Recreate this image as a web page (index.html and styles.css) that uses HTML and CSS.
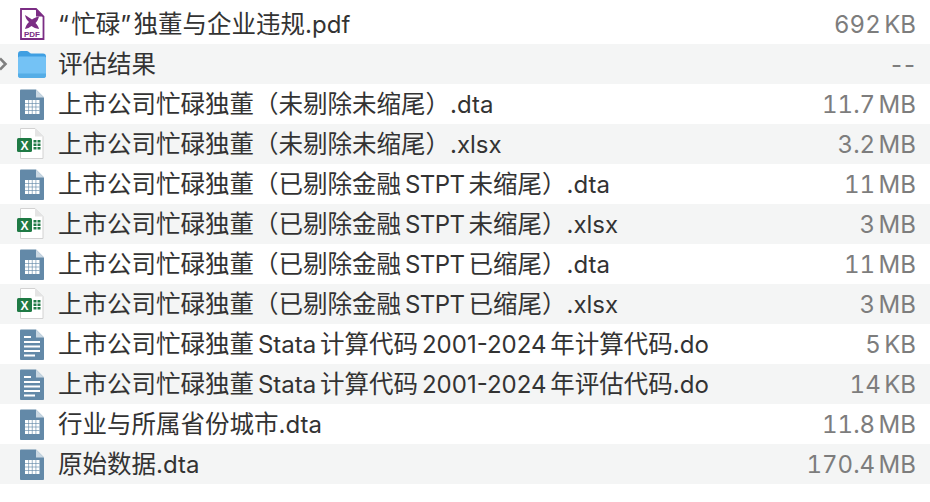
FILE: index.html
```html
<!DOCTYPE html>
<html lang="zh-CN">
<head>
  <meta charset="UTF-8" />
  <title>文件列表</title>
  <link rel="stylesheet" href="styles.css">
</head>
<body>

  <svg class="defs" width="0" height="0">
    <symbol id="i-folder" viewBox="0 0 30 32">
      <path d="M2 6C2 4 3 3 5 3H11C13 3 13.500 5.500 15 5.500H27C29 5.500 30 6.500 30 8.500V27C30 29 29 30 27 30H5C3 30 2 29 2 27Z" fill="#3f9fe2"/>
      <path d="M2 10C2 9 3 8.500 4 8.500H28C29 8.500 30 9 30 10V27C30 29 29 30 27 30H5C3 30 2 29 2 27Z" fill="#74c2f5"/>
      <path d="M2 25.500H30V27C30 29 29 30 27 30H5C3 30 2 29 2 27Z" fill="#55ade6"/>
    </symbol>
    <symbol id="i-dta" viewBox="0 0 30 32">
      <path d="M5 1.500H20L28 9.500V31C28 31.500 27.500 32 27 32H5C4.500 32 4 31.500 4 31V2.500C4 2 4.500 1.500 5 1.500Z" fill="#6389a8"/>
      <path d="M20 1.500L28 9.500H20Z" fill="#c9d7e2"/>
      <path d="M9 12H23.500V26H9Z" fill="#fff"/>
      <path d="M9 15.500H23.500M9 19H23.500M9 22.500H23.500M12.600 12V26M16.250 12V26M19.900 12V26" stroke="#6389a8" stroke-width="0.8" stroke-opacity="0.8"/>
    </symbol>
    <symbol id="i-do" viewBox="0 0 30 32">
      <path d="M5 1.500H20L28 9.500V31C28 31.500 27.500 32 27 32H5C4.500 32 4 31.500 4 31V2.500C4 2 4.500 1.500 5 1.500Z" fill="#6389a8"/>
      <path d="M20 1.500L28 9.500H20Z" fill="#c9d7e2"/>
      <path d="M8 8H15V10H8ZM8 13H24V15H8ZM8 17.500H24V19.500H8ZM8 22H24V24H8ZM8 26.500H19V28.500H8Z" fill="#fff"/>
    </symbol>
  </svg>

  <ul class="files">
    <li class="row"><span class="arrow"></span>
      <svg class="icon" viewBox="0 0 30 32">
        <path d="M5 1H20L27.500 8.500V31H5Z" fill="#fff" stroke="#7b2d84" stroke-width="1.800"/>
        <path d="M20 1V8.500H27.500Z" fill="#7b2d84"/>
        <path d="M9 7C12 9 14 10 16 11.500C18 10 20 9 23 8.500C22.500 11 21 13.500 19.500 15C21 16.500 22.500 18.500 23 21C20 20.500 17.500 19.500 15.500 18C13.500 19.500 11.500 20.500 9 21C9.500 18.500 11 16 13 14C11 12 9.500 10 9 7Z" fill="#7b2d84"/>
        <text x="16" y="28.500" class="pdf-label" text-anchor="middle">PDF</text>
      </svg>
      <span class="name"><span class="quote">“</span>忙碌<span class="quote">”</span>独董与企业违规<span class="lat">.pdf</span></span><span class="size">692 KB</span></li>
    <li class="row"><span class="arrow">
      <svg width="10" height="16" viewBox="0 0 10 16"><path d="M0 2.500L5.500 8L0 13.500" fill="none" stroke="#808080" stroke-width="2.600"/></svg>
    </span><svg class="icon"><use href="#i-folder"/></svg><span class="name">评估结果</span><span class="size empty">--</span></li>
    <li class="row"><span class="arrow"></span><svg class="icon"><use href="#i-dta"/></svg><span class="name">上市公司忙碌独董（未剔除未缩尾）<span class="lat">.dta</span></span><span class="size">11.7 MB</span></li>
    <li class="row"><span class="arrow"></span>
      <svg class="icon" viewBox="0 0 30 32">
        <path d="M4.500 .500H19L27 8.500V30.500H4.500Z" fill="#fff" stroke="#d2d2d2"/>
        <path d="M19 .500V8.500H27Z" fill="#e4e4e4"/>
        <rect x="1" y="10" width="15" height="14" rx="1.500" fill="#1f7a45"/>
        <text x="8.500" y="21.500" class="xl-label" text-anchor="middle">X</text>
        <path d="M17.500 12H20.500V14.500H17.500ZM21.500 12H24.500V14.500H21.500ZM17.500 15.500H20.500V18H17.500ZM21.500 15.500H24.500V18H21.500ZM17.500 19H20.500V21.500H17.500ZM21.500 19H24.500V21.500H21.500Z" fill="#1f7a45"/>
      </svg>
      <span class="name">上市公司忙碌独董（未剔除未缩尾）<span class="lat">.xlsx</span></span><span class="size">3.2 MB</span></li>
    <li class="row"><span class="arrow"></span><svg class="icon"><use href="#i-dta"/></svg><span class="name">上市公司忙碌独董（已剔除金融 <span class="lat caps">STPT</span> 未缩尾）<span class="lat">.dta</span></span><span class="size">11 MB</span></li>
    <li class="row"><span class="arrow"></span>
      <svg class="icon" viewBox="0 0 30 32">
        <path d="M4.500 .500H19L27 8.500V30.500H4.500Z" fill="#fff" stroke="#d2d2d2"/>
        <path d="M19 .500V8.500H27Z" fill="#e4e4e4"/>
        <rect x="1" y="10" width="15" height="14" rx="1.500" fill="#1f7a45"/>
        <text x="8.500" y="21.500" class="xl-label" text-anchor="middle">X</text>
        <path d="M17.500 12H20.500V14.500H17.500ZM21.500 12H24.500V14.500H21.500ZM17.500 15.500H20.500V18H17.500ZM21.500 15.500H24.500V18H21.500ZM17.500 19H20.500V21.500H17.500ZM21.500 19H24.500V21.500H21.500Z" fill="#1f7a45"/>
      </svg>
      <span class="name">上市公司忙碌独董（已剔除金融 <span class="lat caps">STPT</span> 未缩尾）<span class="lat">.xlsx</span></span><span class="size">3 MB</span></li>
    <li class="row"><span class="arrow"></span><svg class="icon"><use href="#i-dta"/></svg><span class="name">上市公司忙碌独董（已剔除金融 <span class="lat caps">STPT</span> 已缩尾）<span class="lat">.dta</span></span><span class="size">11 MB</span></li>
    <li class="row"><span class="arrow"></span>
      <svg class="icon" viewBox="0 0 30 32">
        <path d="M4.500 .500H19L27 8.500V30.500H4.500Z" fill="#fff" stroke="#d2d2d2"/>
        <path d="M19 .500V8.500H27Z" fill="#e4e4e4"/>
        <rect x="1" y="10" width="15" height="14" rx="1.500" fill="#1f7a45"/>
        <text x="8.500" y="21.500" class="xl-label" text-anchor="middle">X</text>
        <path d="M17.500 12H20.500V14.500H17.500ZM21.500 12H24.500V14.500H21.500ZM17.500 15.500H20.500V18H17.500ZM21.500 15.500H24.500V18H21.500ZM17.500 19H20.500V21.500H17.500ZM21.500 19H24.500V21.500H21.500Z" fill="#1f7a45"/>
      </svg>
      <span class="name">上市公司忙碌独董（已剔除金融 <span class="lat caps">STPT</span> 已缩尾）<span class="lat">.xlsx</span></span><span class="size">3 MB</span></li>
    <li class="row"><span class="arrow"></span><svg class="icon"><use href="#i-do"/></svg><span class="name">上市公司忙碌独董 <span class="lat">Stata</span> 计算代码 <span class="lat">2001-2024</span> 年计算代码<span class="lat">.do</span></span><span class="size">5 KB</span></li>
    <li class="row"><span class="arrow"></span><svg class="icon"><use href="#i-do"/></svg><span class="name">上市公司忙碌独董 <span class="lat">Stata</span> 计算代码 <span class="lat">2001-2024</span> 年评估代码<span class="lat">.do</span></span><span class="size">14 KB</span></li>
    <li class="row"><span class="arrow"></span><svg class="icon"><use href="#i-dta"/></svg><span class="name">行业与所属省份城市<span class="lat">.dta</span></span><span class="size">11.8 MB</span></li>
    <li class="row"><span class="arrow"></span><svg class="icon"><use href="#i-dta"/></svg><span class="name">原始数据<span class="lat">.dta</span></span><span class="size">170.4 MB</span></li>
  </ul>

</body>
</html>
```

FILE: styles.css
```css
html, body {
  margin: 0;
  background: #fff;
}
body {
  font-family: Inter, "Noto Sans CJK SC", sans-serif;
  font-size: 24px;
  color: #333;
  padding-top: 4px;
  overflow: hidden;
}
.defs {
  position: absolute;
}
.files {
  list-style: none;
  margin: 0;
  padding: 0;
}
.row {
  display: flex;
  align-items: center;
  height: 40px;
  padding-right: 14px;
}
.row:nth-child(even) {
  background: #f4f5f5;
}
.arrow {
  display: flex;
  align-items: center;
  width: 16px;
  height: 16px;
  flex: none;
}
.icon {
  width: 30px;
  height: 32px;
  margin-right: 12px;
  flex: none;
}
.name {
  flex: 1;
  font-size: 24.5px;
  white-space: nowrap;
  word-spacing: -3px;
  padding-bottom: 4px;
}
.lat {
  font-size: 24px;
}
.caps {
  letter-spacing: -0.5px;
}
.quote {
  letter-spacing: 2.5px;
}
.size {
  color: #7d7d7d;
  word-spacing: -3px;
  font-variant-numeric: tabular-nums;
}
.size.empty {
  font-variant-numeric: normal;
  letter-spacing: 2px;
  margin-right: -1px;
}
.pdf-label {
  font-family: "Liberation Sans", sans-serif;
  font-size: 8px;
  font-weight: 700;
  fill: #7b2d84;
}
.xl-label {
  font-family: "Liberation Sans", sans-serif;
  font-size: 12px;
  font-weight: 700;
  fill: #fff;
}
```
